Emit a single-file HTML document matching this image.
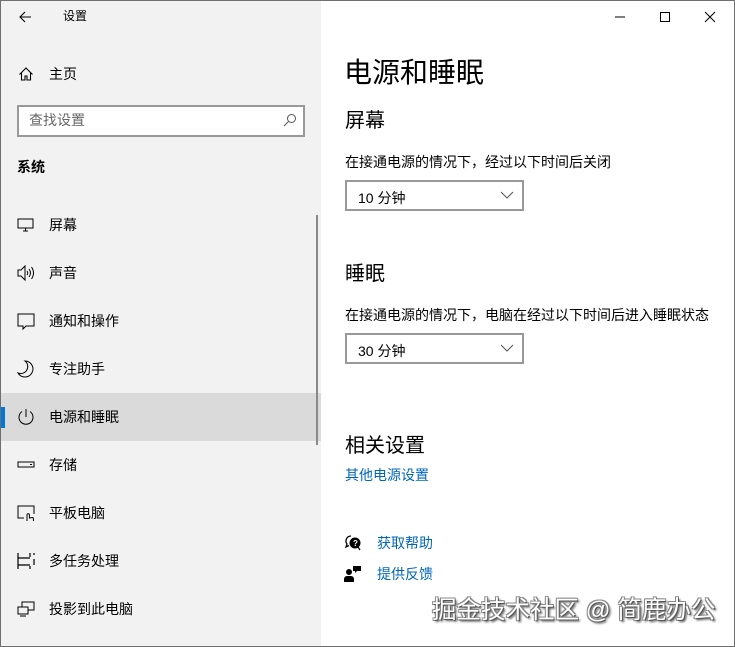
<!DOCTYPE html>
<html><head><meta charset="utf-8"><style>
*{margin:0;padding:0;box-sizing:border-box}
body{width:735px;height:647px;overflow:hidden;font-family:"Liberation Sans","Noto Sans CJK SC",sans-serif;color:#000;background:#fff;position:relative}
.frame{position:absolute;inset:0;border:1px solid #6f6f6f;pointer-events:none;z-index:10}
.left{position:absolute;left:0;top:0;width:321px;height:647px;background:#f2f2f2}
.t{position:absolute;white-space:nowrap;line-height:1}
.nav{position:absolute;left:0;width:321px;height:48px}
.nav .ic{position:absolute;left:16px;top:14px;width:20px;height:20px}
.nav .lb{position:absolute;left:49px;top:16px;font-size:14px;line-height:16px}
.sel{background:#dadada}
.sel:before{content:"";position:absolute;left:1px;top:14px;width:4px;height:21px;background:#0078d7}
.combo{position:absolute;left:345px;width:179px;height:31px;border:2px solid #999;background:#fff}
.combo span{position:absolute;left:11px;top:6px;font-size:14px}
.combo svg{position:absolute;right:8px;top:9px}
.blue{color:#0067b8}
</style></head><body>
<div class="left"></div>
<svg class="t" style="left:17px;top:9px" width="16" height="16" viewBox="0 0 16 16"><path d="M14 8H3M8 3L3 8l5 5" fill="none" stroke="#000" stroke-width="1.1"/></svg>
<div class="t" style="left:63px;top:10px;font-size:12px">设置</div>
<svg class="t" style="left:18px;top:66px" width="16" height="16" viewBox="0 0 16 16"><path d="M1.5 8.5L8 2l6.5 6.5M3.5 6.5V14h3.5v-4h2v4h3.5V6.5" fill="none" stroke="#000" stroke-width="1.1"/></svg>
<div class="t" style="left:49px;top:67px;font-size:14px">主页</div>
<div style="position:absolute;left:17px;top:105px;width:288px;height:32px;border:2px solid #999;background:#fff"></div>
<div class="t" style="left:29px;top:113px;font-size:14px;color:#666">查找设置</div>
<svg class="t" style="left:283px;top:113px" width="14" height="14" viewBox="0 0 14 14"><circle cx="8.5" cy="5.5" r="4" fill="none" stroke="#555"/><path d="M5.5 8.5L1 13" stroke="#555"/></svg>
<div class="t" style="left:17px;top:160px;font-size:14px;font-weight:bold">系统</div>

<div class="nav" style="top:201px"><svg class="ic" viewBox="0 0 20 20"><rect x="2" y="4" width="15" height="9" fill="none" stroke="#000"/><path d="M9.5 13v3M7 16h5" stroke="#000"/></svg><div class="lb">屏幕</div></div>
<div class="nav" style="top:249px"><svg class="ic" viewBox="0 0 20 20"><path d="M2 7h3l4-4v14l-4-4H2z" fill="none" stroke="#000"/><path d="M11 8q1.5 2 0 4M13 6q3 4 0 8M15.5 4q4 6 0 12" fill="none" stroke="#000"/></svg><div class="lb">声音</div></div>
<div class="nav" style="top:297px"><svg class="ic" viewBox="0 0 20 20"><path d="M2 3h16v12h-8l-3 3v-3H2z" fill="none" stroke="#000"/></svg><div class="lb">通知和操作</div></div>
<div class="nav" style="top:345px"><svg class="ic" viewBox="0 0 20 20"><path d="M9 2a8 8 0 1 1-7 12a7 7 0 0 0 7-12z" fill="none" stroke="#000"/></svg><div class="lb">专注助手</div></div>
<div class="nav sel" style="top:393px"><svg class="ic" viewBox="0 0 20 20"><path d="M6 4.5a7 7 0 1 0 8 0" fill="none" stroke="#000"/><path d="M10 2v8" stroke="#000"/></svg><div class="lb">电源和睡眠</div></div>
<div class="nav" style="top:441px"><svg class="ic" viewBox="0 0 20 20"><rect x="2" y="7" width="16" height="5" fill="none" stroke="#000"/><path d="M14 9.5h2" stroke="#000"/></svg><div class="lb">存储</div></div>
<div class="nav" style="top:489px"><svg class="ic" viewBox="0 0 20 20"><path d="M8 15H2V3h16v8" fill="none" stroke="#000"/><path d="M11 18v-6a1.2 1.2 0 0 1 2.4 0v3l3-0.5a1 1 0 0 1 1 1V18" fill="none" stroke="#000"/></svg><div class="lb">平板电脑</div></div>
<div class="nav" style="top:537px"><svg class="ic" viewBox="0 0 20 20"><path d="M2 2v16M2 7h12M2 14h12M14 2v4M14 15v3M18 2v2M18 8v6" fill="none" stroke="#000" stroke-width="1.2"/></svg><div class="lb">多任务处理</div></div>
<div class="nav" style="top:585px"><svg class="ic" viewBox="0 0 20 20"><rect x="6" y="3" width="12" height="8" fill="none" stroke="#000"/><rect x="2" y="8" width="10" height="7" fill="#f2f2f2" stroke="#000"/><path d="M4 17h6" stroke="#000"/></svg><div class="lb">投影到此电脑</div></div>
<div style="position:absolute;left:316px;top:215px;width:2px;height:230px;background:#8a8a8a"></div>

<svg class="t" style="left:614px;top:11px" width="12" height="12"><path d="M1 6h10" stroke="#000"/></svg>
<svg class="t" style="left:659px;top:11px" width="12" height="12"><rect x="1.5" y="1.5" width="9" height="9" fill="none" stroke="#000"/></svg>
<svg class="t" style="left:704px;top:11px" width="12" height="12"><path d="M1 1l10 10M11 1L1 11" stroke="#000"/></svg>

<div class="t" style="left:344px;top:59px;font-size:28px">电源和睡眠</div>
<div class="t" style="left:345px;top:111px;font-size:20px">屏幕</div>
<div class="t" style="left:345px;top:155px;font-size:14px">在接通电源的情况下，经过以下时间后关闭</div>
<div class="combo" style="top:180px"><span>10 分钟</span><svg width="14" height="8"><path d="M1 1l6 6 6-6" fill="none" stroke="#555"/></svg></div>
<div class="t" style="left:345px;top:264px;font-size:20px">睡眠</div>
<div class="t" style="left:345px;top:308px;font-size:14px">在接通电源的情况下，电脑在经过以下时间后进入睡眠状态</div>
<div class="combo" style="top:333px"><span>30 分钟</span><svg width="14" height="8"><path d="M1 1l6 6 6-6" fill="none" stroke="#555"/></svg></div>
<div class="t" style="left:345px;top:436px;font-size:20px">相关设置</div>
<div class="t blue" style="left:345px;top:468px;font-size:14px">其他电源设置</div>
<svg class="t" style="left:344px;top:534px" width="18" height="18" viewBox="0 0 18 18"><path d="M7 2a5 5 0 0 0-4 8l-1 3 3-1.5" fill="none" stroke="#000" stroke-width="1.3"/><circle cx="11" cy="9" r="5.5"/><path d="M14 13l2 3" stroke="#000" stroke-width="1.3"/><text x="9" y="12" font-size="8" fill="#fff" font-family="Liberation Sans" font-weight="bold">?</text></svg>
<div class="t blue" style="left:377px;top:536px;font-size:14px">获取帮助</div>
<svg class="t" style="left:344px;top:565px" width="18" height="18" viewBox="0 0 18 18"><circle cx="5" cy="7" r="3"/><path d="M0 17v-3a3 3 0 0 1 3-3h4a3 3 0 0 1 3 3v3z"/><path d="M9 1h8v5h-4l-2 2V6H9z"/></svg>
<div class="t blue" style="left:377px;top:567px;font-size:14px">提供反馈</div>
<div class="t" style="left:432px;top:599px;font-size:24.5px;color:#fff;text-shadow:1px 1px 0 #555,-1px -1px 0 #888,1px -1px 0 #888,-1px 1px 0 #888,2px 2px 2px #444">掘金技术社区 @ 简鹿办公</div>
<div class="frame"></div>
</body></html>
